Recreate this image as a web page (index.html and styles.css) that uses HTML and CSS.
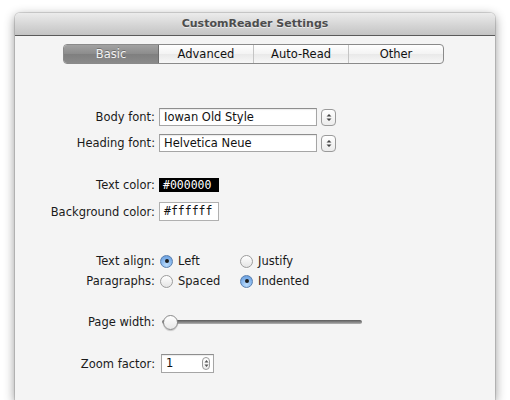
FILE: index.html
```html
<!DOCTYPE html>
<html>
<head>
<meta charset="utf-8">
<link rel="stylesheet" href="styles.css">
</head>
<body>
<div class="window">
  <div class="titlebar">CustomReader Settings</div>
  <div class="content">
    <div class="segmented">
      <div class="seg selected">Basic</div>
      <div class="seg">Advanced</div>
      <div class="seg">Auto-Read</div>
      <div class="seg">Other</div>
    </div>

    <div class="row r-body">
      <span class="label">Body font:</span>
      <div class="combo">
        <div class="field wide">Iowan Old Style</div>
        <div class="stepbtn"><svg width="6" height="9" viewBox="0 0 6 9"><path d="M0.5 3.5 L3 1 L5.5 3.5 Z M0.5 5.5 L3 8 L5.5 5.5 Z" fill="#444"/></svg></div>
      </div>
    </div>
    <div class="row r-heading">
      <span class="label">Heading font:</span>
      <div class="combo">
        <div class="field wide">Helvetica Neue</div>
        <div class="stepbtn"><svg width="6" height="9" viewBox="0 0 6 9"><path d="M0.5 3.5 L3 1 L5.5 3.5 Z M0.5 5.5 L3 8 L5.5 5.5 Z" fill="#444"/></svg></div>
      </div>
    </div>

    <div class="row r-textcolor">
      <span class="label">Text color:</span>
      <div class="colorfield dark">#000000</div>
    </div>
    <div class="row r-bgcolor">
      <span class="label">Background color:</span>
      <div class="colorfield light">#ffffff</div>
    </div>

    <div class="row r-align">
      <span class="label">Text align:</span>
      <div class="radios">
        <span class="radio on"><i></i>Left</span>
        <span class="radio"><i></i>Justify</span>
      </div>
    </div>
    <div class="row r-para">
      <span class="label">Paragraphs:</span>
      <div class="radios">
        <span class="radio"><i></i>Spaced</span>
        <span class="radio on"><i></i>Indented</span>
      </div>
    </div>

    <div class="row r-page">
      <span class="label">Page width:</span>
      <div class="slider"><div class="track"></div><div class="knob"></div></div>
    </div>

    <div class="row r-zoom">
      <span class="label">Zoom factor:</span>
      <div class="field small">1<span class="mini"><svg width="5" height="9" viewBox="0 0 5 9"><path d="M0.5 3.5 L2.5 1 L4.5 3.5 Z M0.5 5.5 L2.5 8 L4.5 5.5 Z" fill="#555"/></svg></span></div>
    </div>
  </div>
</div>
</body>
</html>
```

FILE: styles.css
```css
html, body {
  margin: 0;
  padding: 0;
  background: #ffffff;
}
body {
  font-family: "DejaVu Sans", "Liberation Sans", sans-serif;
  font-size: 11.5px;
  color: #1a1a1a;
  overflow: hidden;
  height: 400px;
}
.window {
  margin: 13px 0 0 15px;
  width: 480px;
  height: 387px;
  background: #f4f4f4;
  border-radius: 5px 5px 0 0;
  box-shadow: 0 3px 11px rgba(0,0,0,0.45), 0 0 0 1px rgba(0,0,0,0.12);
}
.titlebar {
  height: 22px;
  line-height: 22px;
  border-radius: 5px 5px 0 0;
  background: linear-gradient(#ececec, #d3d3d3 60%, #c4c4c4);
  border-bottom: 1px solid #5a5a5a;
  text-align: center;
  font-weight: bold;
  font-size: 11px;
  color: #4d4d4d;
  text-shadow: 0 1px 0 rgba(255,255,255,0.6);
}
.content {
  padding-top: 8px;
}
.segmented {
  display: flex;
  width: 379px;
  height: 18px;
  margin-left: 48px;
  border: 1px solid #8a8a8a;
  border-radius: 4px;
  overflow: hidden;
  background: linear-gradient(#ffffff, #f3f3f3 50%, #e9e9e9 51%, #f7f7f7);
}
.seg {
  flex: 1;
  text-align: center;
  line-height: 18px;
  color: #111;
  border-left: 1px solid #c4c4c4;
}
.seg:first-child {
  border-left: none;
}
.seg.selected {
  background: linear-gradient(#a2a2a2, #8c8c8c 50%, #7f7f7f 51%, #8a8a8a);
  color: #f2f2f2;
  text-shadow: 0 -1px 0 rgba(0,0,0,0.25);
  border-right: 1px solid #6e6e6e;
}
.seg.selected + .seg {
  border-left: none;
}
.row {
  display: grid;
  grid-template-columns: 140px 1fr;
  column-gap: 4px;
  align-items: center;
  height: 18px;
}
.label {
  text-align: right;
  white-space: nowrap;
}
.r-body { margin-top: 44px; }
.r-heading { margin-top: 8px; }
.r-textcolor { margin-top: 24px; }
.r-bgcolor { margin-top: 8px; }
.r-align { margin-top: 32px; }
.r-para { margin-top: 2px; }
.r-page { margin-top: 23px; }
.r-zoom { margin-top: 23px; }

.combo {
  display: flex;
  align-items: center;
  gap: 4px;
}
.field {
  box-sizing: border-box;
  height: 18px;
  line-height: 16px;
  padding: 0 4px;
  background: #fff;
  border: 1px solid #a5a5a5;
  border-top-color: #8e8e8e;
  box-shadow: inset 0 1px 1px rgba(0,0,0,0.08);
  color: #111;
}
.field.wide {
  width: 158px;
}
.stepbtn {
  box-sizing: border-box;
  width: 15px;
  height: 17px;
  border: 1px solid #9a9a9a;
  border-radius: 4px;
  background: linear-gradient(#ffffff, #ececec);
  display: flex;
  align-items: center;
  justify-content: center;
}
.colorfield {
  box-sizing: border-box;
  width: 60px;
  font-family: "DejaVu Sans Mono", "Liberation Mono", monospace;
  font-size: 11.5px;
  padding-left: 4px;
}
.colorfield.dark {
  height: 14px;
  line-height: 14px;
  background: #000;
  color: #fff;
}
.colorfield.light {
  height: 19px;
  line-height: 17px;
  background: #fff;
  border: 1px solid #b0b0b0;
  color: #111;
}
.radios {
  display: grid;
  grid-template-columns: 80px 80px;
}
.radio {
  display: flex;
  align-items: center;
  gap: 5px;
}
.radio i {
  box-sizing: border-box;
  width: 13px;
  height: 13px;
  border-radius: 50%;
  border: 1px solid #9c9c9c;
  background: linear-gradient(#ffffff, #e4e4e4);
  box-shadow: 0 1px 0 rgba(255,255,255,0.6);
  margin-left: 1px;
  display: flex;
  align-items: center;
  justify-content: center;
}
.radio.on i {
  border-color: #5a7fae;
  background: radial-gradient(circle at 50% 80%, #bcdcfb, #7fb1ea 60%, #5f96d8);
}
.radio.on i::after {
  content: "";
  width: 4px;
  height: 4px;
  border-radius: 50%;
  background: #1c1c1c;
}
.slider {
  position: relative;
  height: 18px;
  width: 202px;
  margin-left: 3px;
  display: flex;
  align-items: center;
}
.track {
  width: 200px;
  height: 4px;
  border-radius: 2px;
  background: linear-gradient(#5b5b5b, #8a8a8a 60%, #b5b5b5);
}
.knob {
  position: absolute;
  left: 1px;
  top: 2px;
  box-sizing: border-box;
  width: 15px;
  height: 15px;
  border-radius: 50%;
  border: 1px solid #8a8a8a;
  background: linear-gradient(#ffffff, #e8e8e8);
  box-shadow: 0 1px 1px rgba(0,0,0,0.2);
}
.field.small {
  position: relative;
  width: 53px;
  height: 19px;
  margin-left: 2px;
  padding-left: 4px;
}
.mini {
  position: absolute;
  right: 3px;
  top: 2px;
  box-sizing: border-box;
  width: 8px;
  height: 13px;
  border: 1px solid #9a9a9a;
  border-radius: 4px;
  background: linear-gradient(#fff, #ececec);
  display: flex;
  align-items: center;
  justify-content: center;
}
.mini svg { display: block; }
```
